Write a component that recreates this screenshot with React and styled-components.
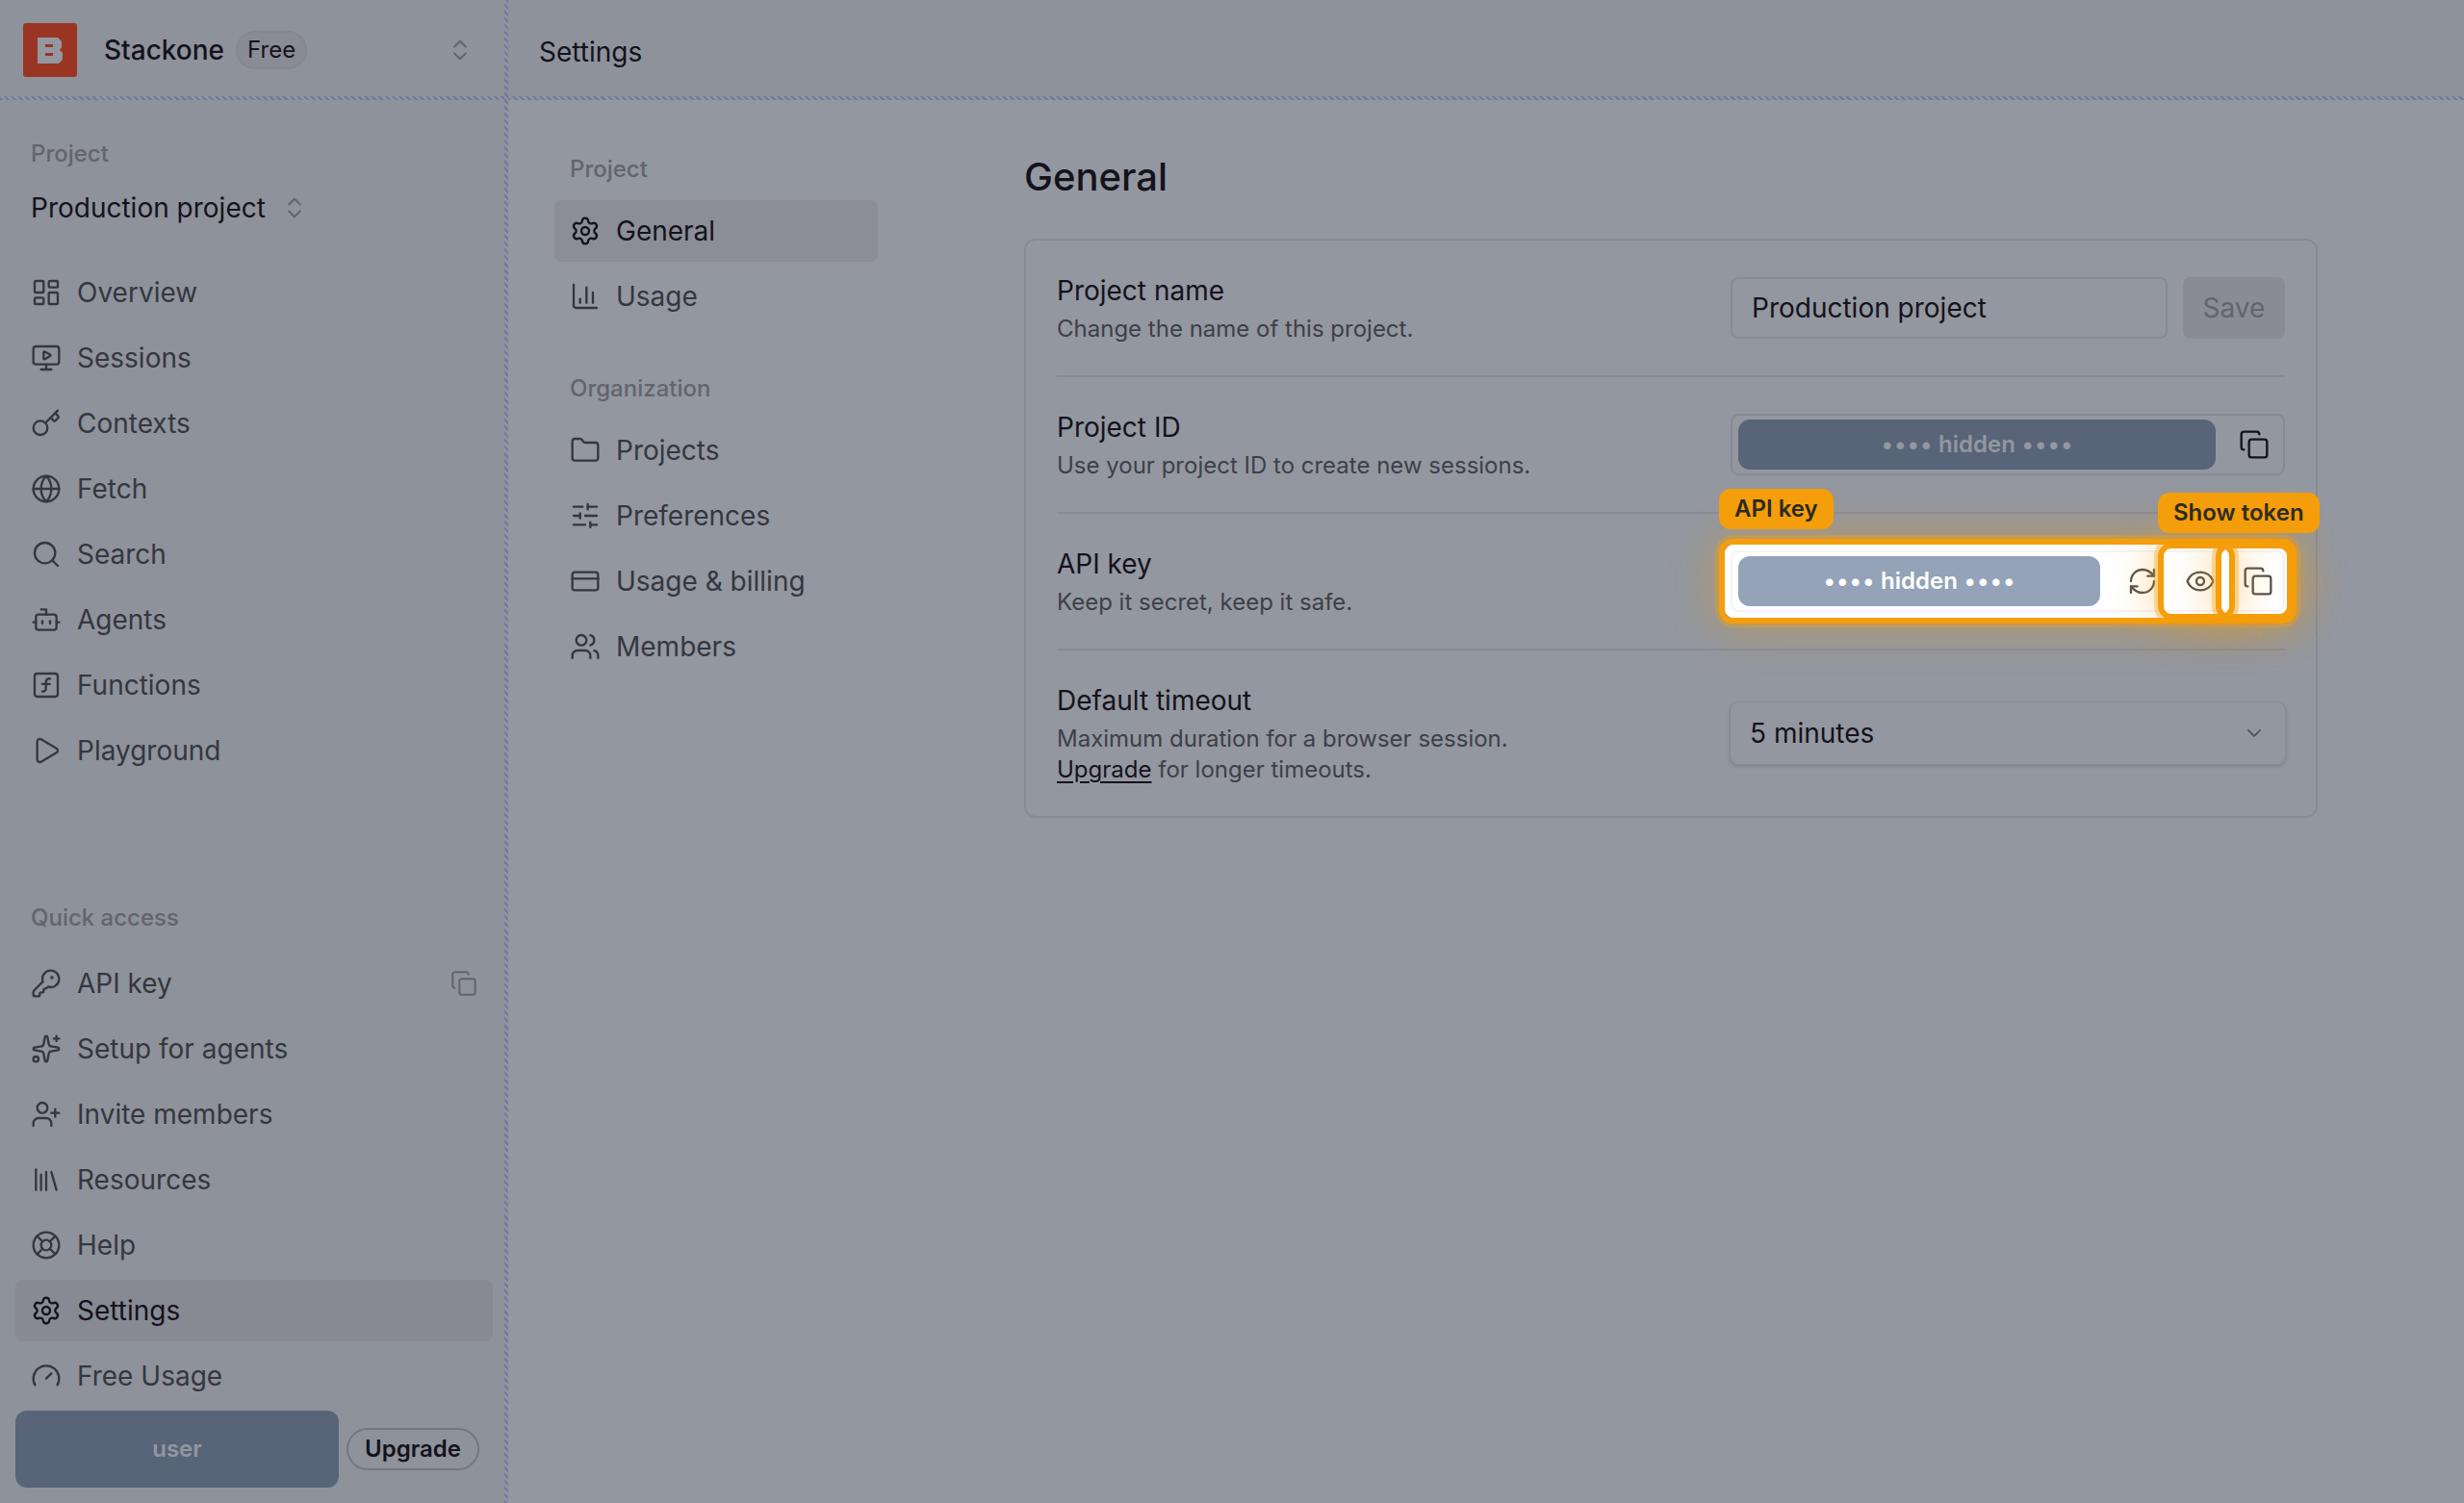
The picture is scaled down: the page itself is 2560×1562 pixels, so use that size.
import styled, { createGlobalStyle, css } from "styled-components";
import {
  Bot,
  ChartColumn,
  ChevronDown,
  ChevronsUpDown,
  Copy,
  CreditCard,
  Eye,
  Folder,
  Gauge,
  Globe,
  Key,
  KeyRound,
  LayoutDashboard,
  LifeBuoy,
  MonitorPlay,
  Play,
  RefreshCw,
  Search,
  Settings,
  SlidersHorizontal,
  Sparkles,
  SquareFunction,
  UserPlus,
  Users,
} from "lucide-react";

const GlobalStyle = createGlobalStyle`
  *, *::before, *::after {
    box-sizing: border-box;
  }
  body {
    margin: 0;
    background: #93979f;
    color: #15121c;
    font-family: Inter, "Liberation Sans", sans-serif;
    font-size: 28px;
    line-height: 40px;
  }
  button, input, select {
    font: inherit;
    color: inherit;
    margin: 0;
  }
  h1, h2, p, ul {
    margin: 0;
    padding: 0;
    list-style: none;
  }
`;

const LibraryIcon = () => (
  <svg width="32" height="32" viewBox="0 0 24 24" fill="none" stroke="currentColor" strokeWidth="1.75" strokeLinecap="round">
    <path d="m16 6 4 14" />
    <path d="M12 6v14" />
    <path d="M8 8v12" />
    <path d="M4 4v16" />
  </svg>
);

const mainLinks = [
  { name: "Overview", icon: LayoutDashboard },
  { name: "Sessions", icon: MonitorPlay },
  { name: "Contexts", icon: Key },
  { name: "Fetch", icon: Globe },
  { name: "Search", icon: Search },
  { name: "Agents", icon: Bot },
  { name: "Functions", icon: SquareFunction },
  { name: "Playground", icon: Play },
];

const quickLinks = [
  { name: "API key", icon: KeyRound, copy: true },
  { name: "Setup for agents", icon: Sparkles },
  { name: "Invite members", icon: UserPlus },
  { name: "Resources", icon: LibraryIcon },
  { name: "Help", icon: LifeBuoy },
  { name: "Settings", icon: Settings, active: true },
  { name: "Free Usage", icon: Gauge },
];

const projectLinks = [
  { name: "General", icon: Settings, active: true },
  { name: "Usage", icon: ChartColumn },
];

const organizationLinks = [
  { name: "Projects", icon: Folder },
  { name: "Preferences", icon: SlidersHorizontal },
  { name: "Usage & billing", icon: CreditCard },
  { name: "Members", icon: Users },
];

const NavList = ({ links }) => (
  <LinkList>
    {links.map(({ name, icon: Icon, active, copy }) => (
      <LinkRow key={name}>
        <NavLink href="#" $active={active}>
          <Icon size={32} strokeWidth={1.75} />
          {name}
        </NavLink>
        {copy && (
          <RowAction aria-label="Copy API key">
            <Copy size={28} strokeWidth={1.75} />
          </RowAction>
        )}
      </LinkRow>
    ))}
  </LinkList>
);

const HiddenValue = ({ bright }) => (
  <Masked $bright={bright}>
    <Dots>••••</Dots> hidden <Dots>••••</Dots>
  </Masked>
);

const App = () => (
  <>
    <GlobalStyle />
    <Page>
      <Sidebar>
        <OrgBar>
          <Logo viewBox="0 0 56 56" aria-hidden="true">
            <rect width="56" height="56" rx="3" fill="#9a3524" />
            <path
              fill="#93979f"
              fillRule="evenodd"
              d="M15 15h21l4 4v6l-2 3 3 3v7l-4 4H15zM23 22v3h8v-3zM23 31v3h8v-3z"
            />
          </Logo>
          <OrgName>Stackone</OrgName>
          <Badge>Free</Badge>
          <SwitchButton aria-label="Switch organization">
            <ChevronsUpDown size={28} strokeWidth={1.75} />
          </SwitchButton>
        </OrgBar>
        <Hatch />
        <SidebarBody>
          <GroupLabel>Project</GroupLabel>
          <ProjectSwitch>
            Production project
            <ChevronsUpDown size={28} strokeWidth={1.75} />
          </ProjectSwitch>
          <NavList links={mainLinks} />
          <QuickAccess>
            <GroupLabel>Quick access</GroupLabel>
            <NavList links={quickLinks} />
          </QuickAccess>
        </SidebarBody>
        <UserBar>
          <UserBlock>user</UserBlock>
          <UpgradeButton>Upgrade</UpgradeButton>
        </UserBar>
      </Sidebar>
      <Hatch $vertical />
      <Main>
        <TopBar>Settings</TopBar>
        <Hatch />
        <Content>
          <SubNav>
            <SubLabel>Project</SubLabel>
            <NavList links={projectLinks} />
            <SubLabel $spaced>Organization</SubLabel>
            <NavList links={organizationLinks} />
          </SubNav>
          <Panel>
            <PanelTitle>General</PanelTitle>
            <Card>
              <Row>
                <div>
                  <RowTitle as="label" htmlFor="project-name">Project name</RowTitle>
                  <RowText>Change the name of this project.</RowText>
                </div>
                <Controls>
                  <TextInput id="project-name" defaultValue="Production project" />
                  <SaveButton disabled>Save</SaveButton>
                </Controls>
              </Row>
              <Row>
                <div>
                  <RowTitle>Project ID</RowTitle>
                  <RowText>Use your project ID to create new sessions.</RowText>
                </div>
                <SecretField>
                  <HiddenValue />
                  <IconButton aria-label="Copy project ID">
                    <Copy size={32} strokeWidth={1.75} />
                  </IconButton>
                </SecretField>
              </Row>
              <Row>
                <div>
                  <RowTitle>API key</RowTitle>
                  <RowText>Keep it secret, keep it safe.</RowText>
                </div>
                <SecretField $bright>
                  <HiddenValue bright />
                  <IconButton aria-label="Regenerate API key">
                    <RefreshCw size={32} strokeWidth={1.75} />
                  </IconButton>
                  <IconButton aria-label="Show API key">
                    <Eye size={32} strokeWidth={1.75} />
                  </IconButton>
                  <IconButton aria-label="Copy API key">
                    <Copy size={32} strokeWidth={1.75} />
                  </IconButton>
                  <FieldRing>
                    <Tag>API key</Tag>
                  </FieldRing>
                  <ButtonRing $right={50}>
                    <Tag>Show token</Tag>
                  </ButtonRing>
                  <ButtonRing $right={-10} />
                </SecretField>
              </Row>
              <Row>
                <div>
                  <RowTitle as="label" htmlFor="timeout">Default timeout</RowTitle>
                  <RowText>
                    Maximum duration for a browser session.
                    <br />
                    <a href="#">Upgrade</a> for longer timeouts.
                  </RowText>
                </div>
                <SelectBox>
                  <Select id="timeout" defaultValue="5">
                    <option value="5">5 minutes</option>
                  </Select>
                  <ChevronDown size={24} strokeWidth={1.75} />
                </SelectBox>
              </Row>
            </Card>
          </Panel>
        </Content>
      </Main>
    </Page>
  </>
);

const Page = styled.div`
  display: flex;
  min-height: 100vh;
`;

const Hatch = styled.div`
  flex: none;
  background: repeating-linear-gradient(45deg, #717c97 0 2px, #9095a1 3px 5px);
  ${({ $vertical }) => ($vertical ? "width: 4px;" : "height: 4px;")}
`;

const Sidebar = styled.aside`
  flex: none;
  width: 524px;
  display: flex;
  flex-direction: column;
  background: #8e929a;
`;

const OrgBar = styled.div`
  display: flex;
  align-items: center;
  height: 100px;
  padding: 4px 32px 0 24px;
`;

const Logo = styled.svg`
  width: 56px;
  height: 56px;
  margin-right: 28px;
`;

const OrgName = styled.span`
  font-weight: 500;
  margin-right: 12px;
`;

const Badge = styled.span`
  display: flex;
  align-items: center;
  height: 40px;
  padding: 0 10px;
  border: 2px solid #858891;
  border-radius: 20px;
  background: #898c94;
  font-size: 24px;
`;

const plainButton = css`
  display: flex;
  align-items: center;
  padding: 0;
  border: 0;
  background: none;
`;

const SwitchButton = styled.button`
  ${plainButton}
  margin-left: auto;
  color: #62656d;
`;

const SidebarBody = styled.div`
  flex: 1;
  padding: 36px 12px 0 16px;
`;

const GroupLabel = styled.h2`
  padding: 0 16px;
  font-size: 24px;
  font-weight: 500;
  line-height: 40px;
  color: #62656d;
`;

const ProjectSwitch = styled.button`
  ${plainButton}
  gap: 16px;
  height: 72px;
  margin-bottom: 20px;
  padding: 0 16px;
  svg {
    color: #62656d;
  }
`;

const LinkList = styled.ul`
  display: grid;
  gap: 4px;
`;

const LinkRow = styled.li`
  display: grid;
  align-items: center;
  > * {
    grid-area: 1 / 1;
  }
`;

const NavLink = styled.a`
  display: flex;
  align-items: center;
  gap: 16px;
  height: 64px;
  padding: 0 16px;
  border-radius: 8px;
  color: ${({ $active }) => ($active ? "#15121c" : "#34373f")};
  background: ${({ $active }) => ($active ? "rgba(40, 30, 50, 0.07)" : "none")};
  text-decoration: none;
`;

const RowAction = styled.button`
  ${plainButton}
  justify-self: end;
  margin-right: 16px;
  color: #62656d;
`;

const QuickAccess = styled.section`
  padding-top: 122px;
  ${LinkList} {
    margin-top: 16px;
  }
`;

const UserBar = styled.div`
  display: flex;
  align-items: center;
  gap: 8px;
  padding: 4px 26px 16px 16px;
`;

const UserBlock = styled.div`
  flex: 1;
  height: 80px;
  border-radius: 12px;
  background: #586478;
  color: #93979f;
  font-size: 24px;
  font-weight: 600;
  line-height: 80px;
  text-align: center;
`;

const UpgradeButton = styled.button`
  height: 44px;
  padding: 0 17px;
  border: 2px solid #747780;
  border-radius: 22px;
  background: none;
  font-size: 24px;
  font-weight: 600;
  line-height: 40px;
`;

const Main = styled.main`
  flex: 1;
  min-width: 0;
  display: flex;
  flex-direction: column;
`;

const TopBar = styled.h1`
  display: flex;
  align-items: center;
  height: 100px;
  padding: 8px 32px 0;
  background: #8e929a;
  font-size: 28px;
  font-weight: 400;
`;

const Content = styled.div`
  flex: 1;
  display: flex;
  gap: 152px;
  padding: 52px 152px 48px 48px;
`;

const SubNav = styled.nav`
  flex: none;
  width: 336px;
`;

const SubLabel = styled(GroupLabel)`
  padding-top: ${({ $spaced }) => ($spaced ? "44px" : 0)};
  margin-bottom: 12px;
`;

const Panel = styled.section`
  flex: 1;
`;

const PanelTitle = styled.h2`
  font-size: 40px;
  font-weight: 500;
  line-height: 56px;
`;

const Card = styled.div`
  margin-top: 36px;
  padding: 0 32px;
  border: 2px solid #878b94;
  border-radius: 12px;
`;

const Row = styled.div`
  display: grid;
  grid-template-columns: 1fr 576px;
  align-items: center;
  padding: 32px 0;
  & + & {
    border-top: 2px solid #878b94;
  }
`;

const RowTitle = styled.h2`
  display: block;
  margin-bottom: 4px;
  font-size: 28px;
  font-weight: 400;
  line-height: 40px;
`;

const RowText = styled.p`
  font-size: 24px;
  line-height: 32px;
  color: #3d4048;
  a {
    color: #15121c;
    text-underline-offset: 4px;
  }
`;

const Controls = styled.div`
  display: flex;
  gap: 16px;
`;

const TextInput = styled.input`
  flex: 1;
  min-width: 0;
  height: 64px;
  padding: 0 20px;
  border: 2px solid #878b94;
  border-radius: 8px;
  background: none;
`;

const SaveButton = styled.button`
  width: 106px;
  padding: 0;
  border: 0;
  border-radius: 8px;
  background: #898c95;
  color: #62656d;
`;

const SecretField = styled.div`
  position: relative;
  display: flex;
  align-items: center;
  gap: ${({ $bright }) => ($bright ? "28px" : "24px")};
  height: 64px;
  padding: 0 ${({ $bright }) => ($bright ? "10px" : "14px")} 0 6px;
  border: 2px solid ${({ $bright }) => ($bright ? "#f5f3f5" : "#878b94")};
  border-radius: 8px;
  color: ${({ $bright }) => ($bright ? "#57514a" : "inherit")};
  ${({ $bright }) => $bright && "background: #fff; box-shadow: 0 0 0 8px #fff;"}
`;

const Masked = styled.div`
  flex: 1;
  height: 52px;
  border-radius: 12px;
  background: ${({ $bright }) => ($bright ? "#94a3b8" : "#586478")};
  color: ${({ $bright }) => ($bright ? "#fff" : "#93979f")};
  font-size: 24px;
  font-weight: 600;
  line-height: 52px;
  text-align: center;
`;

const Dots = styled.span`
  font-weight: 400;
`;

const IconButton = styled.button`
  ${plainButton}
`;

const ring = css`
  position: absolute;
  border: 6px solid #f59e0b;
  border-radius: 14px;
  box-shadow: 0 0 0 4px rgba(245, 158, 11, 0.35), 0 0 48px rgba(245, 158, 11, 0.45);
  pointer-events: none;
`;

const FieldRing = styled.div`
  ${ring}
  inset: -14px;
`;

const ButtonRing = styled.div`
  ${ring}
  top: -10px;
  right: ${({ $right }) => $right}px;
  width: 80px;
  height: 80px;
`;

const Tag = styled.span`
  position: absolute;
  left: -6px;
  bottom: calc(100% + 16px);
  height: 42px;
  padding: 0 16px;
  border-radius: 12px;
  background: #f59e0b;
  color: #2a2b22;
  font-size: 24px;
  font-weight: 600;
  line-height: 42px;
  white-space: nowrap;
`;

const SelectBox = styled.div`
  display: grid;
  align-items: center;
  > * {
    grid-area: 1 / 1;
  }
  svg {
    justify-self: end;
    margin-right: 20px;
    color: #4c4f58;
    pointer-events: none;
  }
`;

const Select = styled.select`
  width: 100%;
  height: 64px;
  padding: 0 20px;
  border: 0;
  border-radius: 8px;
  appearance: none;
  background: #93979f;
  box-shadow: 0 0 0 1px #868a93, 0 2px 4px rgba(30, 30, 45, 0.25);
`;

export default App;
